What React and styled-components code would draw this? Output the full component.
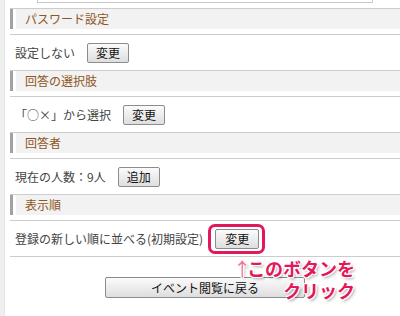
import React from "react";
import styled, { createGlobalStyle } from "styled-components";

const Global = createGlobalStyle`
  html, body { margin: 0; padding: 0; background: #fff; }
  body { font-family: "Noto Sans CJK JP", "Noto Sans", sans-serif; font-size: 12px; color: #444; }
`;

const Page = styled.div`
  display: flex;
  min-height: 316px;
`;

const SideStrip = styled.div`
  width: 4px;
  flex: none;
  background: #efefef;
  border-right: 1px solid #e6e6e6;
`;

const Main = styled.div`
  flex: 1;
  margin-left: 5px;
`;

const TopBox = styled.div`
  height: 2px;
  margin: 0 27px 5px;
  border: 1px solid #c8c8c8;
  border-top: none;
`;

const List = styled.div`
  border-top: 1px solid #cccccc;
`;

const HeaderWrap = styled.div`
  padding-bottom: 5px;
  border-bottom: 1px solid #cccccc;
`;

const HeaderBar = styled.div`
  display: flex;
  border-left: 3px solid #a2a2a2;
`;

const HeaderTitle = styled.h3`
  flex: 1;
  margin: 0 0 0 3px;
  height: 20px;
  line-height: 20px;
  padding-left: 9px;
  background: #f2f2f2;
  color: #8f5623;
  font-size: 12px;
  font-weight: normal;
`;

const Row = styled.div`
  display: flex;
  align-items: center;
  gap: 12px;
  height: 35px;
  padding-left: 5px;
  border-bottom: 1px solid #cccccc;
  color: #444;
`;

const Button = styled.button`
  height: ${(p) => (p.$wide ? 21 : 20)}px;
  width: ${(p) => (p.$wide ? "200px" : "auto")};
  padding: 0 ${(p) => (p.$pad ?? 8)}px;
  border: 1px solid #8c8c8c;
  border-radius: 2px;
  background: linear-gradient(#fbfbfb, #dedede);
  color: #111;
  font-family: "Noto Sans CJK JP", sans-serif;
  font-size: 12px;
  line-height: 18px;
  cursor: pointer;
`;

const Highlight = styled.span`
  position: relative;
  display: inline-flex;
  &::before {
    content: "";
    position: absolute;
    top: -5px;
    bottom: -5px;
    left: -7px;
    right: -6px;
    border: 3px solid #e3185c;
    border-radius: 7px;
  }
`;

const Callout = styled.div`
  position: absolute;
  left: 18px;
  top: 28px;
  white-space: nowrap;
  font-family: "Noto Sans CJK JP", sans-serif;
  font-weight: 700;
  font-size: 18px;
  line-height: 22px;
  color: #e3185c;
  text-shadow: -1px -1px 0 #fff, 1px -1px 0 #fff, -1px 1px 0 #fff, 1px 1px 0 #fff,
    2px 2px 3px rgba(0, 0, 0, 0.35);
  z-index: 2;
`;

const CalloutLine = styled.div`
  margin-left: ${(p) => p.$indent || 0}px;
`;

const Arrow = styled.span`
  display: inline-block;
  width: 14px;
  color: #ee6f97;
  font-weight: 400;
  letter-spacing: -4px;
`;

const Footer = styled.div`
  display: flex;
  justify-content: center;
  padding-top: 20px;
`;

const sections = [
  { title: "パスワード設定", label: "設定しない", btn: "変更" },
  { title: "回答の選択肢", label: "「○×」から選択", btn: "変更" },
  { title: "回答者", label: "現在の人数：9人", btn: "追加" },
  { title: "表示順", label: "登録の新しい順に並べる(初期設定)", btn: "変更", highlight: true },
];

export default function App() {
  return (
    <>
      <Global />
      <Page>
        <SideStrip />
        <Main>
          <TopBox />
          <List>
            {sections.map((s) => (
              <React.Fragment key={s.title}>
                <HeaderWrap>
                  <HeaderBar>
                    <HeaderTitle>{s.title}</HeaderTitle>
                  </HeaderBar>
                </HeaderWrap>
                <Row>
                  <span>{s.label}</span>
                  {s.highlight ? (
                    <Highlight>
                      <Button $pad={9}>{s.btn}</Button>
                      <Callout>
                        <CalloutLine>
                          <Arrow>↑</Arrow>このボタンを
                        </CalloutLine>
                        <CalloutLine $indent={50}>クリック</CalloutLine>
                      </Callout>
                    </Highlight>
                  ) : (
                    <Button>{s.btn}</Button>
                  )}
                </Row>
              </React.Fragment>
            ))}
          </List>
          <Footer>
            <Button $wide>イベント閲覧に戻る</Button>
          </Footer>
        </Main>
      </Page>
    </>
  );
}
